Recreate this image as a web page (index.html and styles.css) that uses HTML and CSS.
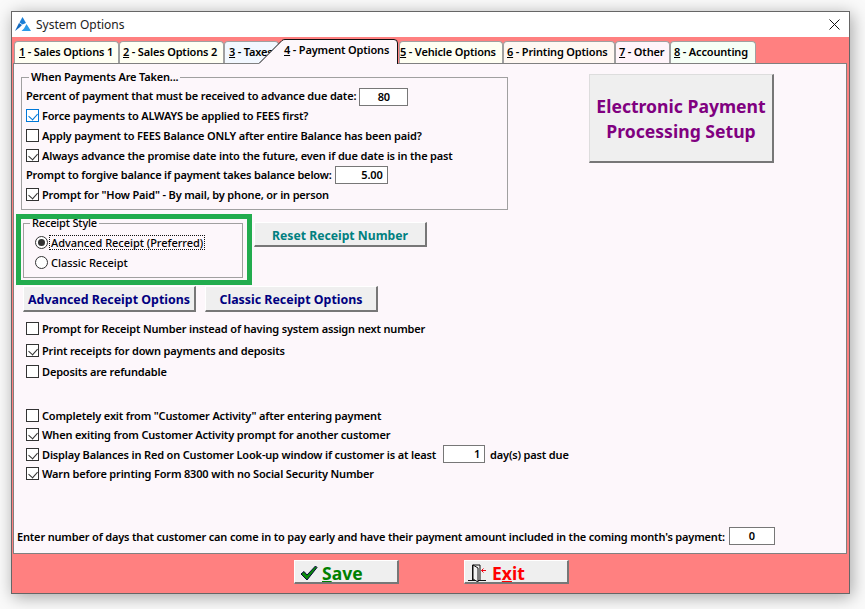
FILE: index.html
```html
<!DOCTYPE html>
<html lang="en">
<head>
<meta charset="utf-8">
<title>System Options</title>
<link rel="stylesheet" href="styles.css">
</head>
<body>
<div class="window">
  <header class="titlebar">
    <svg class="logo" viewBox="0 0 16 14" width="16" height="14"><path d="M7.5 0 L11 6 L7.5 7.5 L4.5 5.5Z" fill="#1b7fd6"/><path d="M4 6 L7 8 L4.5 10.5 L0 14Z" fill="#1268bd"/><path d="M11.5 7 L16 14 H6.5 L9 11.5Z" fill="#2b9be8"/></svg>
    <span class="title">System Options</span>
    <svg class="close" viewBox="0 0 11 11" width="11" height="11"><path d="M.5 .5 L10.5 10.5 M10.5 .5 L.5 10.5" stroke="#111" stroke-width="1" fill="none"/></svg>
  </header>
  <main class="body">
    <nav class="tabs">
      <div class="tab t1"><u>1</u> - Sales Options 1</div>
      <div class="tab t2"><u>2</u> - Sales Options 2</div>
      <div class="tab t3"><u>3</u> - Taxes</div>
      <div class="tab active">
        <svg class="active-shape" viewBox="0 0 139 25" width="139" height="25"><path d="M0 24.5 L23 1.5 Q24 .5 26 .5 H135 Q138.5 .5 138.5 4 V25 H0Z" fill="#fdf7fb"/><path d="M0 24.5 L23 1.5 Q24 .5 26 .5 H135 Q138.5 .5 138.5 4 V25" fill="none" stroke="#111"/></svg>
        <span class="active-label"><u>4</u> - Payment Options</span>
      </div>
      <div class="tab t5"><u>5</u> - Vehicle Options</div>
      <div class="tab t6"><u>6</u> - Printing Options</div>
      <div class="tab t7"><u>7</u> - Other</div>
      <div class="tab t8"><u>8</u> - Accounting</div>
    </nav>
    <section class="panel">
      <div class="top-row">
        <fieldset class="group payments">
          <legend>When Payments Are Taken...</legend>
          <div class="row plain">Percent of payment that must be received to advance due date:<span class="field center w49 low">80</span></div>
          <div class="row"><span class="check focus on"></span>Force payments to ALWAYS be applied to FEES first?</div>
          <div class="row"><span class="check"></span>Apply payment to FEES Balance ONLY after entire Balance has been paid?</div>
          <div class="row"><span class="check on"></span>Always advance the promise date into the future, even if due date is in the past</div>
          <div class="row plain short">Prompt to forgive balance if payment takes balance below:<span class="field right w53">5.00</span></div>
          <div class="row"><span class="check on"></span>Prompt for "How Paid" - By mail, by phone, or in person</div>
        </fieldset>
        <button class="btn epay">Electronic Payment<br>Processing Setup</button>
      </div>
      <div class="receipt-row">
        <div class="highlight">
          <fieldset class="group receipt">
            <legend>Receipt Style</legend>
            <div class="radio-row"><span class="radio on"></span><span class="dotted">Advanced Receipt (Preferred)</span></div>
            <div class="radio-row"><span class="radio"></span><span class="undotted">Classic Receipt</span></div>
          </fieldset>
        </div>
        <button class="btn reset">Reset Receipt Number</button>
      </div>
      <div class="option-buttons">
        <button class="btn navy adv">Advanced Receipt Options</button>
        <button class="btn navy cls">Classic Receipt Options</button>
      </div>
      <div class="options">
        <div class="opt o1"><span class="check"></span>Prompt for Receipt Number instead of having system assign next number</div>
        <div class="opt o2"><span class="check on"></span>Print receipts for down payments and deposits</div>
        <div class="opt o3"><span class="check"></span>Deposits are refundable</div>
        <div class="opt o4"><span class="check"></span>Completely exit from "Customer Activity" after entering payment</div>
        <div class="opt o5"><span class="check on"></span>When exiting from Customer Activity prompt for another customer</div>
        <div class="opt o6"><span class="check on"></span>Display Balances in Red on Customer Look-up window if customer is at least<span class="field right w42">1</span><span class="after">day(s) past due</span></div>
        <div class="opt o5"><span class="check on"></span>Warn before printing Form 8300 with no Social Security Number</div>
      </div>
      <div class="early">Enter number of days that customer can come in to pay early and have their payment amount included in the coming month's payment:<span class="field center w46">0</span></div>
    </section>
    <footer class="actions">
      <button class="btn action save">
        <svg viewBox="0 0 18 16" width="18" height="16"><path d="M1 9 L4 6.5 L7 10 L15.5 1 L17 2.5 L7 15 Z" fill="#0a8a0a" stroke="#06063a" stroke-width="1"/></svg>
        <span><u>S</u>ave</span>
      </button>
      <button class="btn action exit">
        <svg viewBox="0 0 20 18" width="20" height="18"><path d="M0 16.5 H18 M4.5 16.5 V1 H12 V16.5" fill="none" stroke="#111"/><path d="M5 1 L10 4 V18 L5 15Z" fill="#f3f3f3" stroke="#111"/><path d="M18 6.5 H13.5 M15.5 4.5 L13.5 6.5 L15.5 8.5" fill="none" stroke="#f00010"/></svg>
        <span>E<u>x</u>it</span>
      </button>
    </footer>
  </main>
</div>
</body>
</html>
```
FILE: styles.css
```css
* { box-sizing: border-box; }
html, body { height: 100%; }
body {
  margin: 0;
  padding: 11px 0 0 11px;
  background: #fafafa;
  font-family: "Noto Sans", "Open Sans", sans-serif;
  font-size: 11px;
  font-weight: 600;
  letter-spacing: -0.17px;
  color: #000;
  overflow: hidden;
}
.window {
  width: 839px;
  height: 583px;
  display: flex;
  flex-direction: column;
  border: 1px solid #666;
  background: #ff8080;
  box-shadow: 2px 3px 16px rgba(0, 0, 0, .35);
}
.titlebar {
  height: 25px;
  flex: none;
  display: flex;
  align-items: center;
  padding: 0 9px 1px 3px;
  background: #fff;
}
.logo { flex: none; }
.title { margin-left: 5px; font-size: 12px; font-weight: 400; color: #222; letter-spacing: 0; }
.close { margin-left: auto; }
.body { flex: 1; display: flex; flex-direction: column; min-height: 0; }

.tabs { height: 26px; flex: none; display: flex; align-items: flex-end; padding-left: 2px; }
.tab {
  height: 22px;
  line-height: 20px;
  padding-left: 3px;
  white-space: nowrap;
  border: 1px solid #a0a0a0;
  border-bottom: 0;
  border-radius: 4px 4px 0 0;
  flex: none;
  overflow: hidden;
}
.t1 { width: 105px; background: #fffff3; padding-left: 4px; }
.t2 { width: 105px; background: #fffff3; }
.t3 { width: 55px; background: #f2f8ff; padding-left: 4px; }
.t5 { width: 104px; background: #fffff2; padding-left: 0; }
.t6 { width: 112px; background: #fff8f2; }
.t7 { width: 55px; background: #fff4fa; }
.t8 { width: 86px; background: #f6fff6; }
.tab.active {
  position: relative;
  width: 139px;
  height: 25px;
  margin-left: -20px;
  margin-right: 1px;
  margin-bottom: -1px;
  border: 0;
  padding: 0;
  overflow: visible;
  z-index: 2;
}
.active-shape { position: absolute; left: 0; top: 0; }
.active-label { position: absolute; left: 25px; top: 1px; line-height: 20px; }

.panel {
  flex: 1;
  min-height: 0;
  margin-left: 1px;
  width: 834px;
  border: 1px solid #808080;
  background: #fdf7fb;
  padding: 6px 0 0 2px;
  display: flex;
  flex-direction: column;
}
.top-row { display: flex; height: 140px; padding-left: 5px; align-items: flex-start; flex: none; }
fieldset { margin: 0; min-width: 0; }
.group { border: 1px solid #a0a0a0; border-radius: 0; }
.group legend { padding: 0 2px; line-height: 14px; height: 14px; }
.payments { width: 487px; height: 140px; padding: 1px 0 0 4px; }
.payments legend { margin-left: 3px; }
.row { height: 20px; display: flex; align-items: center; white-space: nowrap; }
.row.short { height: 19px; }
.check {
  flex: none;
  position: relative;
  width: 13px;
  height: 13px;
  margin-right: 3px;
  background: #fff;
  border: 1px solid #333;
}
.check.on::after {
  content: "";
  position: absolute;
  left: 2px;
  top: 0;
  width: 7px;
  height: 5px;
  margin: 1px 0 0 0;
  border-left: 1px solid #333;
  border-bottom: 1px solid #333;
  transform: rotate(-48deg) translate(-1px, 1px);
}
.check.focus { border-color: #0078d7; }
.check.focus::after { border-color: #0078d7; }
.field {
  flex: none;
  display: inline-block;
  height: 18px;
  line-height: 16px;
  border: 1px solid #777;
  background: #fff;
  margin-left: 3px;
}
.field.low { margin-top: 3px; }
.center { text-align: center; }
.right { text-align: right; padding-right: 4px; }
.w49 { width: 49px; }
.w53 { width: 53px; }
.w42 { width: 42px; margin-left: 7px; }
.w46 { width: 46px; margin-left: 4px; }
.after { margin-left: 5px; }

.btn {
  font: inherit;
  letter-spacing: 0;
  display: block;
  padding: 2px 0 0;
  background: #efefef;
  border: 0;
  border-top: 1px solid #fff;
  border-left: 1px solid #fff;
  border-right: 2px solid #777;
  border-bottom: 2px solid #777;
  cursor: default;
}
.epay {
  width: 185px;
  height: 89px;
  margin: 4px 0 0 81px;
  font-size: 17.6px;
  font-weight: 700;
  line-height: 25px;
  color: #800080;
  border-top-color: #ddd;
  border-left-color: #ddd;
}
.receipt-row { display: flex; align-items: flex-start; margin-top: 4px; flex: none; }
.highlight { width: 236px; height: 71px; border: 5px solid #22ac4e; padding-left: 2px; flex: none; }
.receipt { width: 220px; height: 62px; margin-top: -3px; padding: 0; }
.receipt legend { margin-left: 6px; font-weight: 500; }
.radio-row { height: 20px; display: flex; align-items: center; padding-left: 11px; margin-top: 2px; font-weight: 500; letter-spacing: -0.03px; }
.radio-row + .radio-row { margin-top: 0; }
.radio {
  flex: none;
  width: 13px;
  height: 13px;
  border-radius: 50%;
  border: 1px solid #333;
  background: #fff;
  position: relative;
  margin-right: 2px;
}
.radio.on::after {
  content: "";
  position: absolute;
  left: 2px;
  top: 2px;
  width: 7px;
  height: 7px;
  border-radius: 50%;
  background: #333;
}
.dotted { outline: 1px dotted #111; padding: 0 1px; line-height: 13px; }
.undotted { padding: 0 1px; }
.reset { width: 173px; height: 25px; margin: 8px 0 0 2px; font-size: 12.2px; font-weight: 700; color: #008080; }
.option-buttons { display: flex; gap: 9px; margin: 1px 0 0 7px; flex: none; }
.navy { width: 173px; height: 26px; font-size: 12.4px; font-weight: 700; color: #000080; }
.options { margin: 7px 0 0 10px; flex: none; }
.opt { height: 18px; display: flex; align-items: center; white-space: nowrap; }
.o2 { margin-top: 4px; }
.o3 { margin-top: 3px; }
.o4 { margin-top: 26px; }
.o5 { margin-top: 1px; }
.o6 { margin-top: 2px; }
.early { height: 18px; margin: 45px 0 0 1px; display: flex; align-items: center; white-space: nowrap; }

.actions { flex: none; height: 39px; display: flex; align-items: flex-start; padding: 6px 0 0 282px; gap: 65px; }
.action {
  width: 105px;
  height: 24px;
  display: flex;
  align-items: center;
  gap: 4px;
  font-size: 17.5px;
  font-weight: 700;
  line-height: 22px;
  padding-left: 5px;
}
.save { color: #008000; }
.exit { color: #ff0000; padding-left: 3px; gap: 4px; }
```
